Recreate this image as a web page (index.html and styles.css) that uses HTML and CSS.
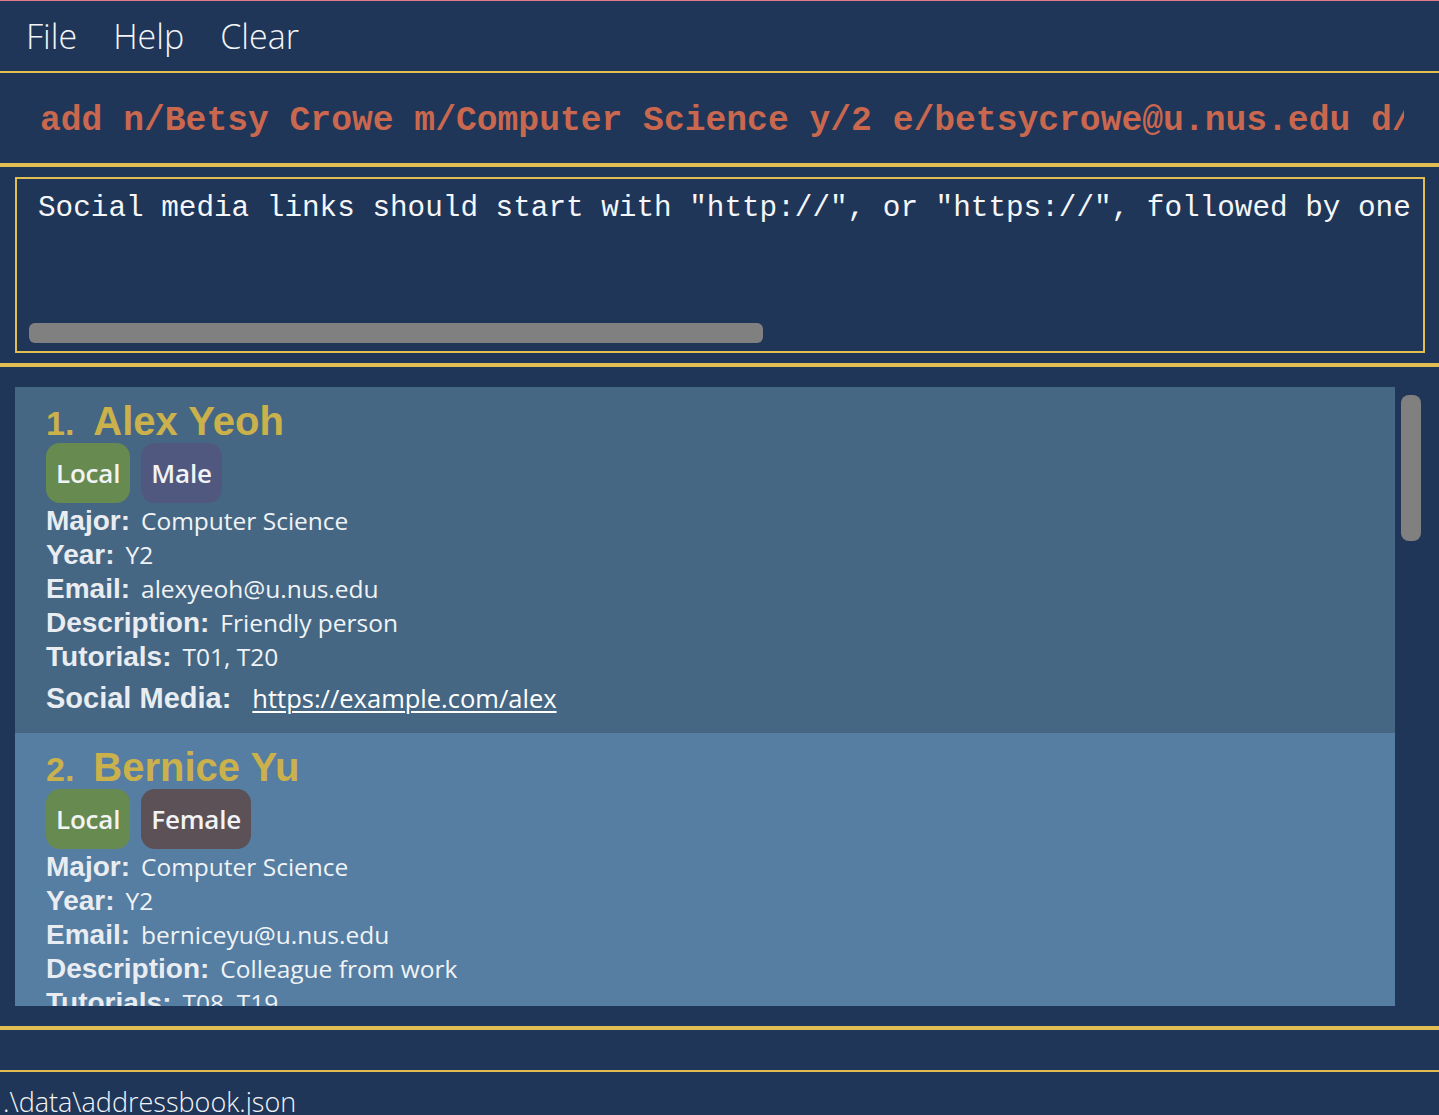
FILE: index.html
```html
<!DOCTYPE html>
<html lang="en">
<head>
<meta charset="utf-8">
<title>Address Book</title>
<link rel="stylesheet" href="styles.css">
</head>
<body>
<div class="app">
  <nav class="menubar">
    <span class="menu-item">File</span>
    <span class="menu-item">Help</span>
    <span class="menu-item">Clear</span>
  </nav>
  <div class="command">
    <div class="command-input">add n/Betsy Crowe m/Computer Science y/2 e/betsycrowe@u.nus.edu d/Friendly t/T01 s/example.com</div>
  </div>
  <div class="result-section">
    <div class="result-box">
      <div class="result-text">Social media links should start with "http://", or "https://", followed by one or more characters, and must not contain spaces or be blank.</div>
      <div class="hscroll"><div class="hthumb"></div></div>
    </div>
  </div>
  <div class="list-section">
    <div class="list-viewport">
      <div class="card card-odd">
        <div class="name-row"><span class="index">1.</span><span class="name">Alex Yeoh</span></div>
        <div class="tags"><span class="tag tag-local">Local</span><span class="tag tag-male">Male</span></div>
        <div class="field"><span class="label">Major:</span><span class="value">Computer Science</span></div>
        <div class="field"><span class="label">Year:</span><span class="value">Y2</span></div>
        <div class="field"><span class="label">Email:</span><span class="value">alexyeoh@u.nus.edu</span></div>
        <div class="field"><span class="label">Description:</span><span class="value">Friendly person</span></div>
        <div class="field"><span class="label">Tutorials:</span><span class="value">T01, T20</span></div>
        <div class="field social"><span class="label">Social Media:</span><span class="link">https://example.com/alex</span></div>
      </div>
      <div class="card card-even">
        <div class="name-row"><span class="index">2.</span><span class="name">Bernice Yu</span></div>
        <div class="tags"><span class="tag tag-local">Local</span><span class="tag tag-female">Female</span></div>
        <div class="field"><span class="label">Major:</span><span class="value">Computer Science</span></div>
        <div class="field"><span class="label">Year:</span><span class="value">Y2</span></div>
        <div class="field"><span class="label">Email:</span><span class="value">berniceyu@u.nus.edu</span></div>
        <div class="field"><span class="label">Description:</span><span class="value">Colleague from work</span></div>
        <div class="field"><span class="label">Tutorials:</span><span class="value">T08, T19</span></div>
        <div class="field social"><span class="label">Social Media:</span><span class="link">https://example.com/bernice</span></div>
      </div>
    </div>
    <div class="vscroll"><div class="vthumb"></div></div>
  </div>
  <div class="status-placeholder"></div>
  <div class="status-bar">.\data\addressbook.json</div>
</div>
</body>
</html>
```
FILE: styles.css
```css
html, body {
  margin: 0;
  padding: 0;
}

body {
  background: #1f3658;
  width: 1439px;
  height: 1115px;
  overflow: hidden;
}

.app {
  border-top: 1px solid #e27a8f;
  background: #1f3658;
  height: 1114px;
  overflow: hidden;
}

.menubar {
  display: flex;
  gap: 36px;
  height: 72px;
  box-sizing: border-box;
  padding: 12px 0 0 26px;
  border-bottom: 2px solid #e1bd52;
}

.menu-item {
  font-family: "Open Sans", "Noto Sans", sans-serif;
  font-weight: 300;
  font-size: 34px;
  line-height: 46px;
  color: #f2f4f7;
}

.command {
  height: 94px;
  box-sizing: border-box;
  padding: 28px 35px 0 40px;
  border-bottom: 4px solid #e1bd52;
}

.command-input {
  font-family: "Liberation Mono", "Courier New", monospace;
  font-weight: bold;
  font-size: 34.67px;
  line-height: 40px;
  color: #c9674f;
  white-space: nowrap;
  overflow: hidden;
}

.result-section {
  padding: 10px 14px 10px 15px;
  border-bottom: 4px solid #e1bd52;
}

.result-box {
  height: 176px;
  box-sizing: border-box;
  border: 2px solid #e1bd52;
  display: flex;
  flex-direction: column;
  overflow: hidden;
}

.result-text {
  flex: 1;
  padding: 12px 0 0 21px;
  font-family: "Liberation Mono", "Courier New", monospace;
  font-size: 29.33px;
  line-height: 36px;
  color: #f4f6f9;
  white-space: nowrap;
  overflow: hidden;
}

.hscroll {
  padding: 0 12px 8px 12px;
}

.hthumb {
  width: 734px;
  height: 20px;
  border-radius: 6px;
  background: #808080;
}

.list-section {
  display: flex;
  height: 663px;
  box-sizing: border-box;
  padding: 20px 18px 20px 15px;
  border-bottom: 4px solid #e1bd52;
}

.list-viewport {
  width: 1380px;
  height: 619px;
  overflow: hidden;
}

.vscroll {
  margin-left: 6px;
  padding-top: 8px;
  width: 20px;
}

.vthumb {
  width: 20px;
  height: 146px;
  border-radius: 8px;
  background: #808080;
}

.card {
  padding: 12px 31px 18px 31px;
  box-sizing: border-box;
  height: 346px;
}

.card-odd {
  background: #466783;
}

.card-even {
  background: #567ea2;
}

.name-row {
  display: flex;
  align-items: baseline;
  gap: 19px;
  height: 44px;
  font-family: "Liberation Sans", Arial, sans-serif;
  font-weight: bold;
  color: #cbb14b;
  line-height: 44px;
}

.index {
  font-size: 34px;
}

.name {
  font-size: 40px;
}

.tags {
  display: flex;
  gap: 11px;
  margin-bottom: 1px;
}

.tag {
  height: 60px;
  line-height: 60px;
  padding: 0 10px 0 10px;
  border-radius: 14px;
  font-family: "Open Sans", "Noto Sans", sans-serif;
  font-weight: 600;
  font-size: 26px;
  letter-spacing: -0.2px;
  color: #f1f3f5;
}

.tag-local {
  background: #678a50;
}

.tag-male {
  background: #51587f;
}

.tag-female {
  background: #5b5157;
}

.field {
  font-family: "Liberation Sans", Arial, sans-serif;
  font-size: 28px;
  line-height: 34px;
  height: 34px;
  white-space: nowrap;
}

.label {
  font-weight: bold;
  color: #e9edf2;
}

.value {
  margin-left: 11px;
  font-family: "Open Sans", "Noto Sans", sans-serif;
  font-size: 24.5px;
  color: #f0f3f6;
}

.social {
  margin-top: 7px;
}

.social .label {
  font-size: 29px;
}

.link {
  margin-left: 21px;
  font-family: "Open Sans", "Noto Sans", sans-serif;
  font-size: 25.5px;
  color: #ffffff;
  text-decoration: underline;
  text-decoration-thickness: 2px;
  text-underline-offset: 3px;
}

.status-placeholder {
  height: 40px;
  border-bottom: 2px solid #e1bd52;
}

.status-bar {
  padding: 11px 0 0 3px;
  font-family: "Open Sans", "Noto Sans", sans-serif;
  font-weight: 300;
  font-size: 27px;
  line-height: 38px;
  color: #f2f4f7;
  white-space: nowrap;
}
```
